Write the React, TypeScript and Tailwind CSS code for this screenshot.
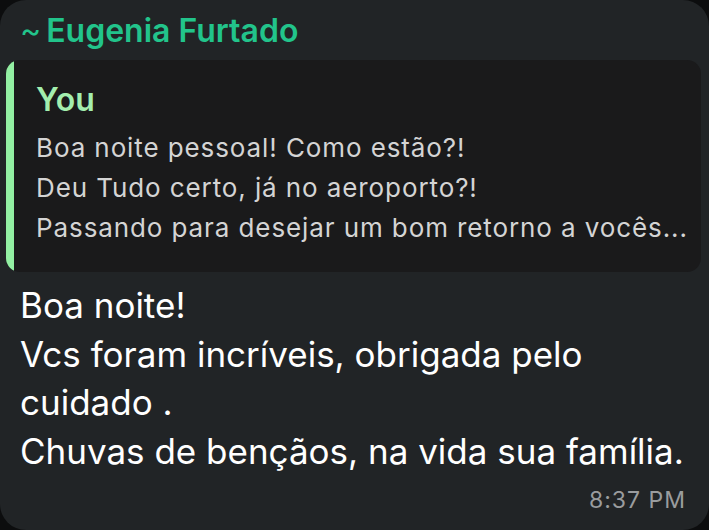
import React from "react";

const QUOTE_LINES = [
  "Boa noite pessoal! Como estão?!",
  "Deu Tudo certo, já no aeroporto?!",
  "Passando para desejar um bom retorno a vocês...",
];

const BODY_LINES = [
  "Boa noite!",
  "Vcs foram incríveis, obrigada pelo",
  "cuidado .",
  "Chuvas de bençãos, na vida sua família.",
];

const App: React.FC = () => {
  return (
    <div
      className="w-[709px] h-[530px] bg-[#0c0d0e] overflow-hidden"
      style={{ fontFamily: "Inter, 'Noto Sans', sans-serif" }}
    >
      <div className="h-full w-full bg-[#212426] rounded-[26px] flex flex-col">
        {/* Sender */}
        <div className="pl-[20px] pt-[12px] h-[60px] text-[32px] leading-[38px] font-semibold text-[#22c48b]">
          <span className="font-normal mr-[5px]">~</span>Eugenia Furtado
        </div>

        {/* Quoted reply */}
        <div className="ml-[6px] mr-[8px] h-[212px] bg-[#1a1a1b] rounded-[14px] flex overflow-hidden">
          <div className="w-[8px] bg-[#93f0a3] rounded-l-[14px]" />
          <div className="pl-[22px] pt-[22px]">
            <div className="text-[32px] leading-[36px] font-semibold text-[#a3eeae]">You</div>
            <div className="mt-[10px] text-[26px] leading-[40px] tracking-[0.9px] text-[#d4d4d4] whitespace-nowrap">
              {QUOTE_LINES.map((line) => (
                <div key={line}>{line}</div>
              ))}
            </div>
          </div>
        </div>

        {/* Message body */}
        <div className="pl-[20px] pt-[9px] text-[35px] leading-[48.5px] text-white whitespace-nowrap">
          {BODY_LINES.map((line) => (
            <div key={line}>{line}</div>
          ))}
        </div>

        <div className="flex justify-end pr-[23px] mt-[11px] text-[23px] leading-[28px] tracking-[1px] text-[#9a9c9e]">
          8:37 PM
        </div>
      </div>
    </div>
  );
};

export default App;
